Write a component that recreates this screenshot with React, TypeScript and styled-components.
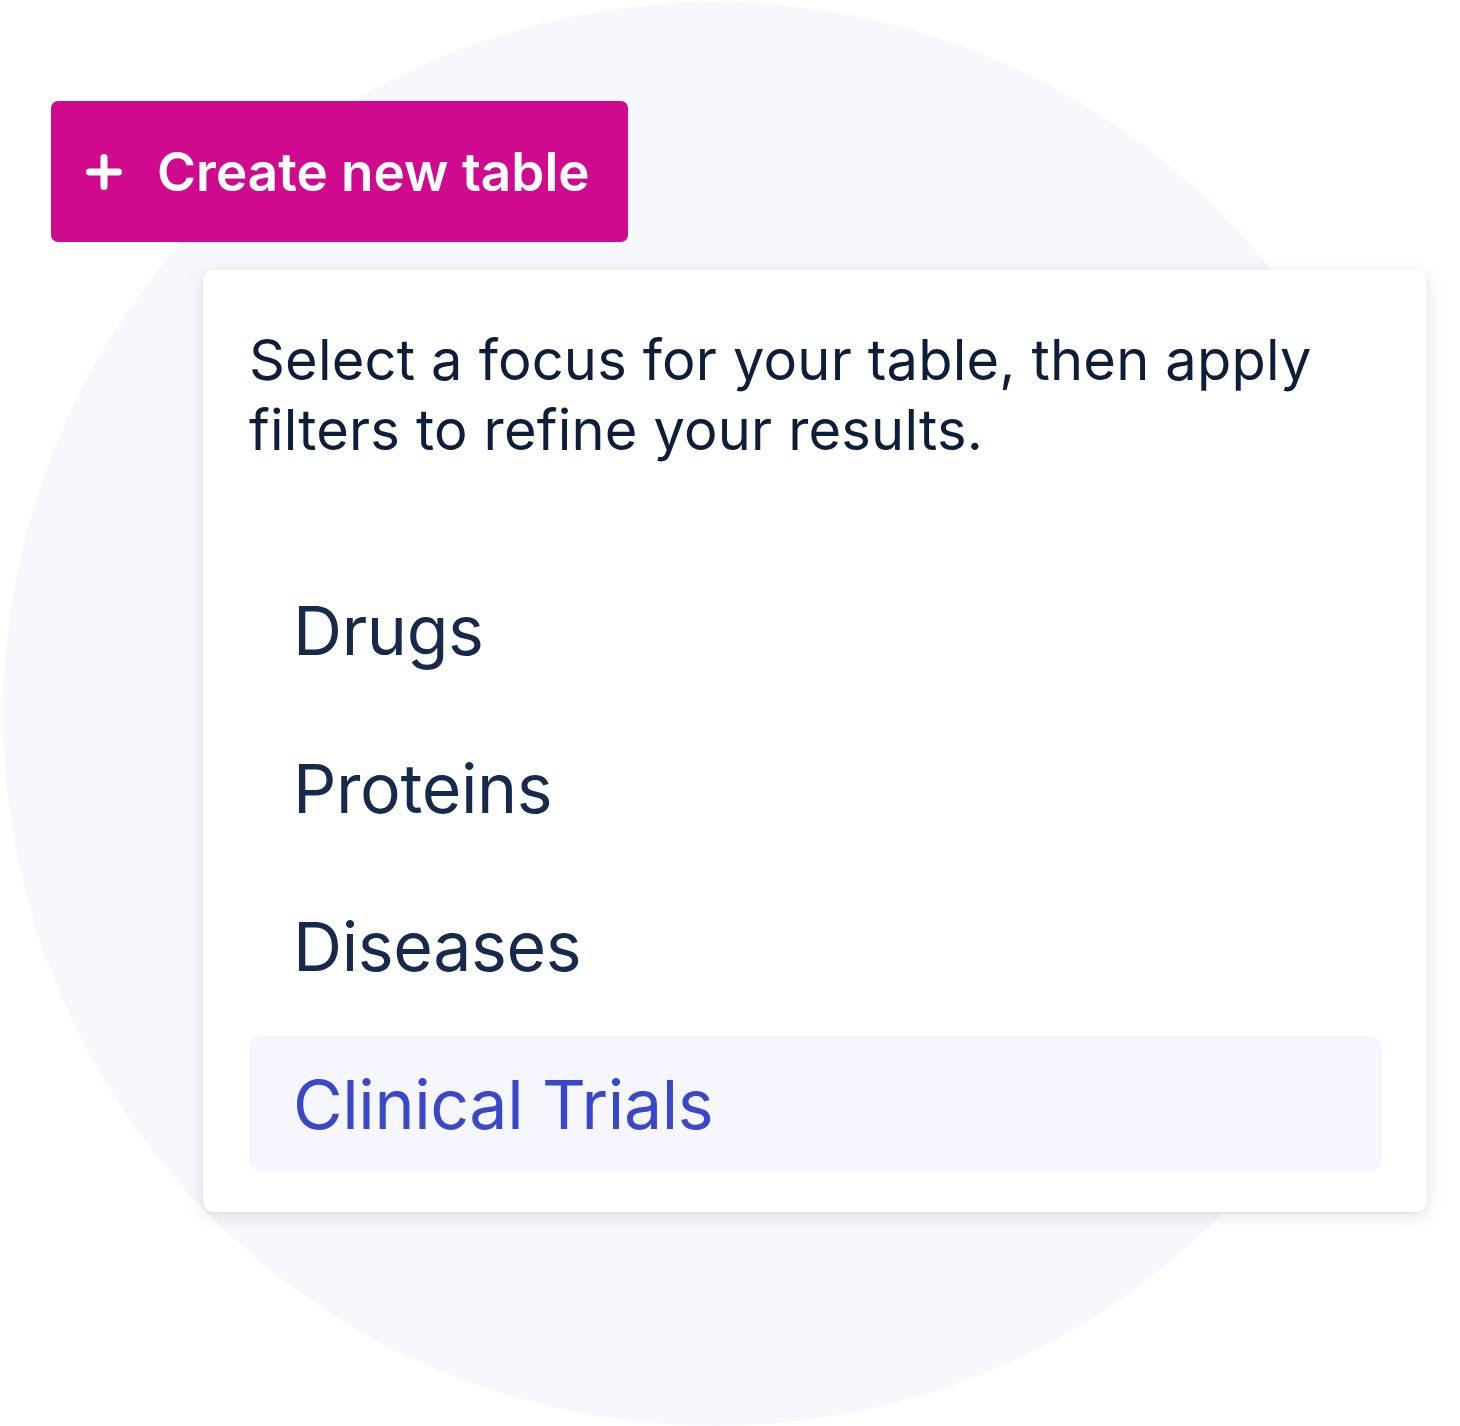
import styled, { createGlobalStyle } from 'styled-components';

const GlobalStyle = createGlobalStyle`
  html, body {
    margin: 0;
    padding: 0;
    background: #ffffff;
  }
  body {
    font-family: Inter, "Noto Sans", sans-serif;
    -webkit-font-smoothing: antialiased;
  }
`;

const Stage = styled.div`
  position: relative;
  width: 1460px;
  height: 1426px;
  overflow: hidden;
  padding: 101px 0 0 51px;
  box-sizing: border-box;
  background: #ffffff;

  &::before {
    content: '';
    position: absolute;
    left: 3px;
    top: 2px;
    width: 1424px;
    height: 1424px;
    border-radius: 50%;
    background: #f7f8fd;
  }
`;

const Content = styled.div`
  position: relative;
  display: flex;
  flex-direction: column;
  align-items: flex-start;
`;

const CreateButton = styled.button`
  display: inline-flex;
  align-items: center;
  gap: 35px;
  height: 141px;
  padding: 0 38px 0 35px;
  border: none;
  border-radius: 7px;
  background: #cf0a8f;
  color: #ffffff;
  font-family: Inter, "Noto Sans", sans-serif;
  font-size: 53px;
  font-weight: 600;
  cursor: pointer;
`;

const Menu = styled.div`
  width: 1224px;
  height: 942px;
  box-sizing: border-box;
  margin: 28px 0 0 152px;
  padding: 55px 45px 41px 46px;
  background: #ffffff;
  border-radius: 10px;
  box-shadow: 0 4px 18px rgba(30, 35, 60, 0.12), 0 1px 3px rgba(30, 35, 60, 0.06);
`;

const Intro = styled.p`
  margin: 0 0 97px;
  font-size: 56px;
  line-height: 70px;
  font-weight: 400;
  letter-spacing: 0.18px;
  color: #0f1e38;
`;

const Options = styled.ul`
  list-style: none;
  margin: 0;
  padding: 0;
  display: flex;
  flex-direction: column;
  gap: 23px;
`;

const Option = styled.li<{ $active?: boolean }>`
  display: flex;
  align-items: center;
  height: 135px;
  padding-left: 44px;
  border-radius: 12px;
  font-size: 68px;
  font-weight: 400;
  letter-spacing: -0.4px;
  color: ${(p) => (p.$active ? '#3a47c9' : '#172a4b')};
  background: ${(p) => (p.$active ? '#f6f7fe' : 'transparent')};
`;

const PlusIcon = () => (
  <svg width="36" height="36" viewBox="0 0 36 36" fill="none">
    <path d="M18 3.5v29M3.5 18h29" stroke="#ffffff" strokeWidth="7" strokeLinecap="round" />
  </svg>
);

const focuses = ['Drugs', 'Proteins', 'Diseases', 'Clinical Trials'];

const App = () => {
  return (
    <Stage>
      <GlobalStyle />
      <Content>
        <CreateButton>
          <PlusIcon />
          Create new table
        </CreateButton>
        <Menu>
          <Intro>
            Select a focus for your table, then apply filters to refine your results.
          </Intro>
          <Options>
            {focuses.map((f) => (
              <Option key={f} $active={f === 'Clinical Trials'}>
                {f}
              </Option>
            ))}
          </Options>
        </Menu>
      </Content>
    </Stage>
  );
};

export default App;
